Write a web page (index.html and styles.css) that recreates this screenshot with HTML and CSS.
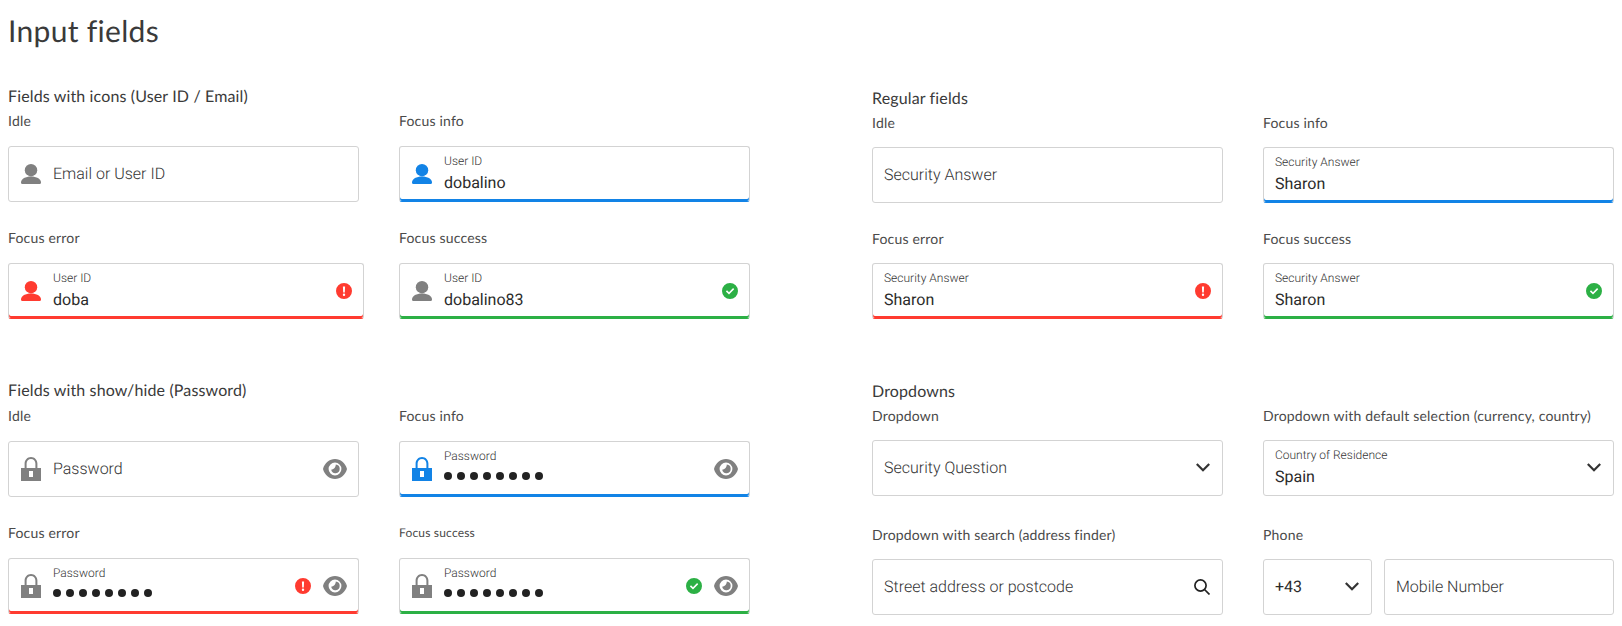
FILE: index.html
```html
<!DOCTYPE html>
<html lang="en">
<head>
<meta charset="utf-8">
<title>Input fields</title>
<link rel="stylesheet" href="styles.css">
</head>
<body>
<svg class="defs" aria-hidden="true">
  <symbol id="user" viewBox="0 0 20 20"><circle cx="10" cy="6.2" r="6.2"/><path d="M0 18.6C0 14.6 4.6 12.4 10 12.4S20 14.6 20 18.6C20 19.5 19.6 20 19 20H1C.4 20 0 19.5 0 18.6Z"/></symbol>
  <symbol id="lock" viewBox="0 0 20 24"><path d="M0 11H3.6V6.6C3.6 2.9 6.4 0 10 0S16.4 2.9 16.4 6.6V11H20V24H0ZM5.6 11H14.4V6.6C14.4 4 12.5 2 10 2S5.6 4 5.6 6.6ZM8 14V20H12V14Z" fill-rule="evenodd"/></symbol>
  <symbol id="eye" viewBox="0 0 24 20"><path d="M0 10C1.5 4 6.5 0 12 0S22.5 4 24 10C22.5 16 17.5 20 12 20S1.5 16 0 10ZM12 3.6A6.4 6.4 0 1 0 12 16.4 6.4 6.4 0 1 0 12 3.6ZM12.8 5.6A4.3 4.3 0 1 1 8.2 10.8C10.4 10.8 12.8 8.4 12.8 5.6Z" fill-rule="evenodd"/></symbol>
  <symbol id="err" viewBox="0 0 16 16"><path d="M8 0A8 8 0 1 1 8 16 8 8 0 1 1 8 0ZM6.9 3.4 7.2 9.6H8.8L9.1 3.4ZM8 10.5A1.2 1.2 0 1 0 8 12.9 1.2 1.2 0 1 0 8 10.5Z" fill-rule="evenodd"/></symbol>
  <symbol id="ok" viewBox="0 0 16 16"><path d="M8 0A8 8 0 1 1 8 16 8 8 0 1 1 8 0ZM11.1 5.1 7 9.2 5 7.3 3.9 8.4 7 11.4 12.2 6.2Z" fill-rule="evenodd"/></symbol>
  <symbol id="chev" viewBox="0 0 14 9"><path d="M.8 1 7 7.2 13.2 1" fill="none" stroke="currentColor" stroke-width="2.2"/></symbol>
  <symbol id="search" viewBox="0 0 16 16"><circle cx="6.5" cy="6.5" r="5.6" fill="none" stroke="currentColor" stroke-width="1.7"/><path d="M10.5 10.5 15.5 15.5" fill="none" stroke="currentColor" stroke-width="1.7"/></symbol>
</svg>

<h1 class="title">Input fields</h1>

<main class="board">
  <div class="stack">
    <section class="panel panel-a">
      <h2 class="heading">Fields with icons (User ID / Email)</h2>
      <div class="cells">
        <div class="cell">
          <div class="label">Idle</div>
          <div class="field">
            <svg class="icon icon-lead grey"><use href="#user"/></svg>
            <span class="placeholder">Email or User ID</span>
          </div>
        </div>
        <div class="cell">
          <div class="label">Focus info</div>
          <div class="field info">
            <svg class="icon icon-lead blue"><use href="#user"/></svg>
            <div class="stacked"><div class="mini">User ID</div><div class="value">dobalino</div></div>
          </div>
        </div>
        <div class="cell">
          <div class="label">Focus error</div>
          <div class="field error wide">
            <svg class="icon icon-lead red"><use href="#user"/></svg>
            <div class="stacked"><div class="mini">User ID</div><div class="value">doba</div></div>
            <svg class="status red"><use href="#err"/></svg>
          </div>
        </div>
        <div class="cell">
          <div class="label">Focus success</div>
          <div class="field success">
            <svg class="icon icon-lead grey"><use href="#user"/></svg>
            <div class="stacked"><div class="mini">User ID</div><div class="value">dobalino83</div></div>
            <svg class="status green"><use href="#ok"/></svg>
          </div>
        </div>
      </div>
    </section>

    <section class="panel panel-b">
      <h2 class="heading">Fields with show/hide (Password)</h2>
      <div class="cells">
        <div class="cell">
          <div class="label">Idle</div>
          <div class="field">
            <svg class="icon icon-lock grey"><use href="#lock"/></svg>
            <span class="placeholder">Password</span>
            <svg class="eye grey"><use href="#eye"/></svg>
          </div>
        </div>
        <div class="cell">
          <div class="label">Focus info</div>
          <div class="field info">
            <svg class="icon icon-lock blue"><use href="#lock"/></svg>
            <div class="stacked"><div class="mini">Password</div><div class="dots"><i></i><i></i><i></i><i></i><i></i><i></i><i></i><i></i></div></div>
            <svg class="eye grey"><use href="#eye"/></svg>
          </div>
        </div>
        <div class="cell">
          <div class="label">Focus error</div>
          <div class="field error">
            <svg class="icon icon-lock grey"><use href="#lock"/></svg>
            <div class="stacked"><div class="mini">Password</div><div class="dots"><i></i><i></i><i></i><i></i><i></i><i></i><i></i><i></i></div></div>
            <svg class="status red before-eye"><use href="#err"/></svg>
            <svg class="eye grey"><use href="#eye"/></svg>
          </div>
        </div>
        <div class="cell">
          <div class="label label-small">Focus success</div>
          <div class="field success">
            <svg class="icon icon-lock grey"><use href="#lock"/></svg>
            <div class="stacked"><div class="mini">Password</div><div class="dots"><i></i><i></i><i></i><i></i><i></i><i></i><i></i><i></i></div></div>
            <svg class="status green before-eye"><use href="#ok"/></svg>
            <svg class="eye grey"><use href="#eye"/></svg>
          </div>
        </div>
      </div>
    </section>
  </div>

  <div class="stack">
    <section class="panel panel-c">
      <h2 class="heading">Regular fields</h2>
      <div class="cells">
        <div class="cell">
          <div class="label">Idle</div>
          <div class="field"><span class="placeholder">Security Answer</span></div>
        </div>
        <div class="cell">
          <div class="label">Focus info</div>
          <div class="field info">
            <div class="stacked"><div class="mini">Security Answer</div><div class="value">Sharon</div></div>
          </div>
        </div>
        <div class="cell">
          <div class="label">Focus error</div>
          <div class="field error">
            <div class="stacked"><div class="mini">Security Answer</div><div class="value">Sharon</div></div>
            <svg class="status red"><use href="#err"/></svg>
          </div>
        </div>
        <div class="cell">
          <div class="label">Focus success</div>
          <div class="field success">
            <div class="stacked"><div class="mini">Security Answer</div><div class="value">Sharon</div></div>
            <svg class="status green"><use href="#ok"/></svg>
          </div>
        </div>
      </div>
    </section>

    <section class="panel panel-d">
      <h2 class="heading">Dropdowns</h2>
      <div class="cells">
        <div class="cell">
          <div class="label">Dropdown</div>
          <div class="field">
            <span class="placeholder">Security Question</span>
            <svg class="chevron"><use href="#chev"/></svg>
          </div>
        </div>
        <div class="cell">
          <div class="label">Dropdown with default selection (currency, country)</div>
          <div class="field">
            <div class="stacked"><div class="mini">Country of Residence</div><div class="value">Spain</div></div>
            <svg class="chevron"><use href="#chev"/></svg>
          </div>
        </div>
        <div class="cell">
          <div class="label">Dropdown with search (address finder)</div>
          <div class="field">
            <span class="placeholder">Street address or postcode</span>
            <svg class="search"><use href="#search"/></svg>
          </div>
        </div>
        <div class="cell">
          <div class="label">Phone</div>
          <div class="phone">
            <div class="field code">
              <span class="value">+43</span>
              <svg class="chevron"><use href="#chev"/></svg>
            </div>
            <div class="field number"><span class="placeholder">Mobile Number</span></div>
          </div>
        </div>
      </div>
    </section>
  </div>
</main>
</body>
</html>
```

FILE: styles.css
```css
* { box-sizing: border-box; }

html, body { margin: 0; background: #fff; }

body {
  width: 1622px;
  height: 626px;
  overflow: hidden;
  padding: 0 8px;
  font-family: "Lato", sans-serif;
  color: #333;
  text-rendering: geometricPrecision;
}

.defs { display: none; }

.title {
  margin: 11px 0 0;
  height: 41px;
  font-size: 30px;
  line-height: 40px;
  font-weight: 400;
  color: #3a3a3a;
  letter-spacing: 0.3px;
}

.board {
  display: grid;
  grid-template-columns: 742px 742px;
  column-gap: 122px;
}

.heading {
  margin: 0;
  height: 20px;
  font-size: 16px;
  line-height: 20px;
  font-weight: 400;
  color: #3a3a3a;
  letter-spacing: 0.14px;
}

.cells {
  display: grid;
  grid-template-columns: 351px 351px;
  column-gap: 40px;
  row-gap: var(--row-gap);
  margin-top: var(--head-gap);
}

.panel-a { margin-top: 35px; --head-gap: 4px; --label-gap: 15px; --row-gap: 26px; }
.panel-b { margin-top: 62px; --head-gap: 5px; --label-gap: 15px; --row-gap: 26px; }
.panel-c { margin-top: 37px; --head-gap: 4px; --label-gap: 14px; --row-gap: 26px; }
.panel-d { margin-top: 63px; --head-gap: 4px; --label-gap: 14px; --row-gap: 29px; }

.label {
  height: 20px;
  margin-bottom: var(--label-gap);
  font-size: 14px;
  line-height: 20px;
  color: #4a4a4a;
  letter-spacing: 0.18px;
  white-space: nowrap;
}

.label-small { font-size: 12px; }

.field {
  display: flex;
  align-items: center;
  height: 56px;
  padding: 0 11px 1px;
  background: #fff;
  border: 1px solid #d3d3d3;
  border-radius: 3px;
}

.field.wide { margin-right: -5px; }

.field.info { border-bottom-color: #1283e6; box-shadow: inset 0 -2px 0 #1283e6; }
.field.error { border-bottom-color: #ff3b30; box-shadow: inset 0 -2px 0 #ff3b30; }
.field.success { border-bottom-color: #2cb045; box-shadow: inset 0 -2px 0 #2cb045; }

.icon { flex: none; margin: 0 12px 0 1px; fill: currentColor; }
.icon-lead { width: 20px; height: 20px; }
.icon-lock { width: 20px; height: 24px; }

.grey { color: #808080; }
.blue { color: #1283e6; }
.red { color: #ff3b30; }
.green { color: #2cb045; }

.placeholder {
  font-family: "Roboto", sans-serif;
  font-size: 16px;
  font-weight: 300;
  color: #333;
  white-space: nowrap;
}

.mini {
  height: 14px;
  font-family: "Roboto", sans-serif;
  font-size: 12px;
  line-height: 14px;
  font-weight: 300;
  color: #333;
  white-space: nowrap;
}

.value {
  display: block;
  margin-top: 5px;
  height: 20px;
  font-family: "Roboto", sans-serif;
  font-size: 16px;
  line-height: 20px;
  font-weight: 400;
  color: #2b2b2b;
  white-space: nowrap;
}

.code .value { margin-top: 0; }

.dots {
  display: flex;
  gap: 5px;
  height: 20px;
  margin: 3px 0 2px;
  align-items: center;
}

.dots i {
  display: block;
  width: 8px;
  height: 8px;
  border-radius: 50%;
  background: #222;
}

.status,
.eye,
.chevron,
.search { flex: none; fill: currentColor; }

.status { width: 16px; height: 16px; margin-left: auto; }
.status.before-eye { margin-right: 12px; }

.eye { width: 24px; height: 20px; }
.status + .eye { margin-left: 0; }
.placeholder + .eye,
.stacked + .eye { margin-left: auto; }

.chevron { width: 14px; height: 9px; margin-left: auto; margin-right: 1px; color: #333; }
.search { width: 16px; height: 16px; margin-left: auto; margin-right: 1px; color: #222; }

.phone {
  display: grid;
  grid-template-columns: 109px 230px;
  column-gap: 12px;
}
```
